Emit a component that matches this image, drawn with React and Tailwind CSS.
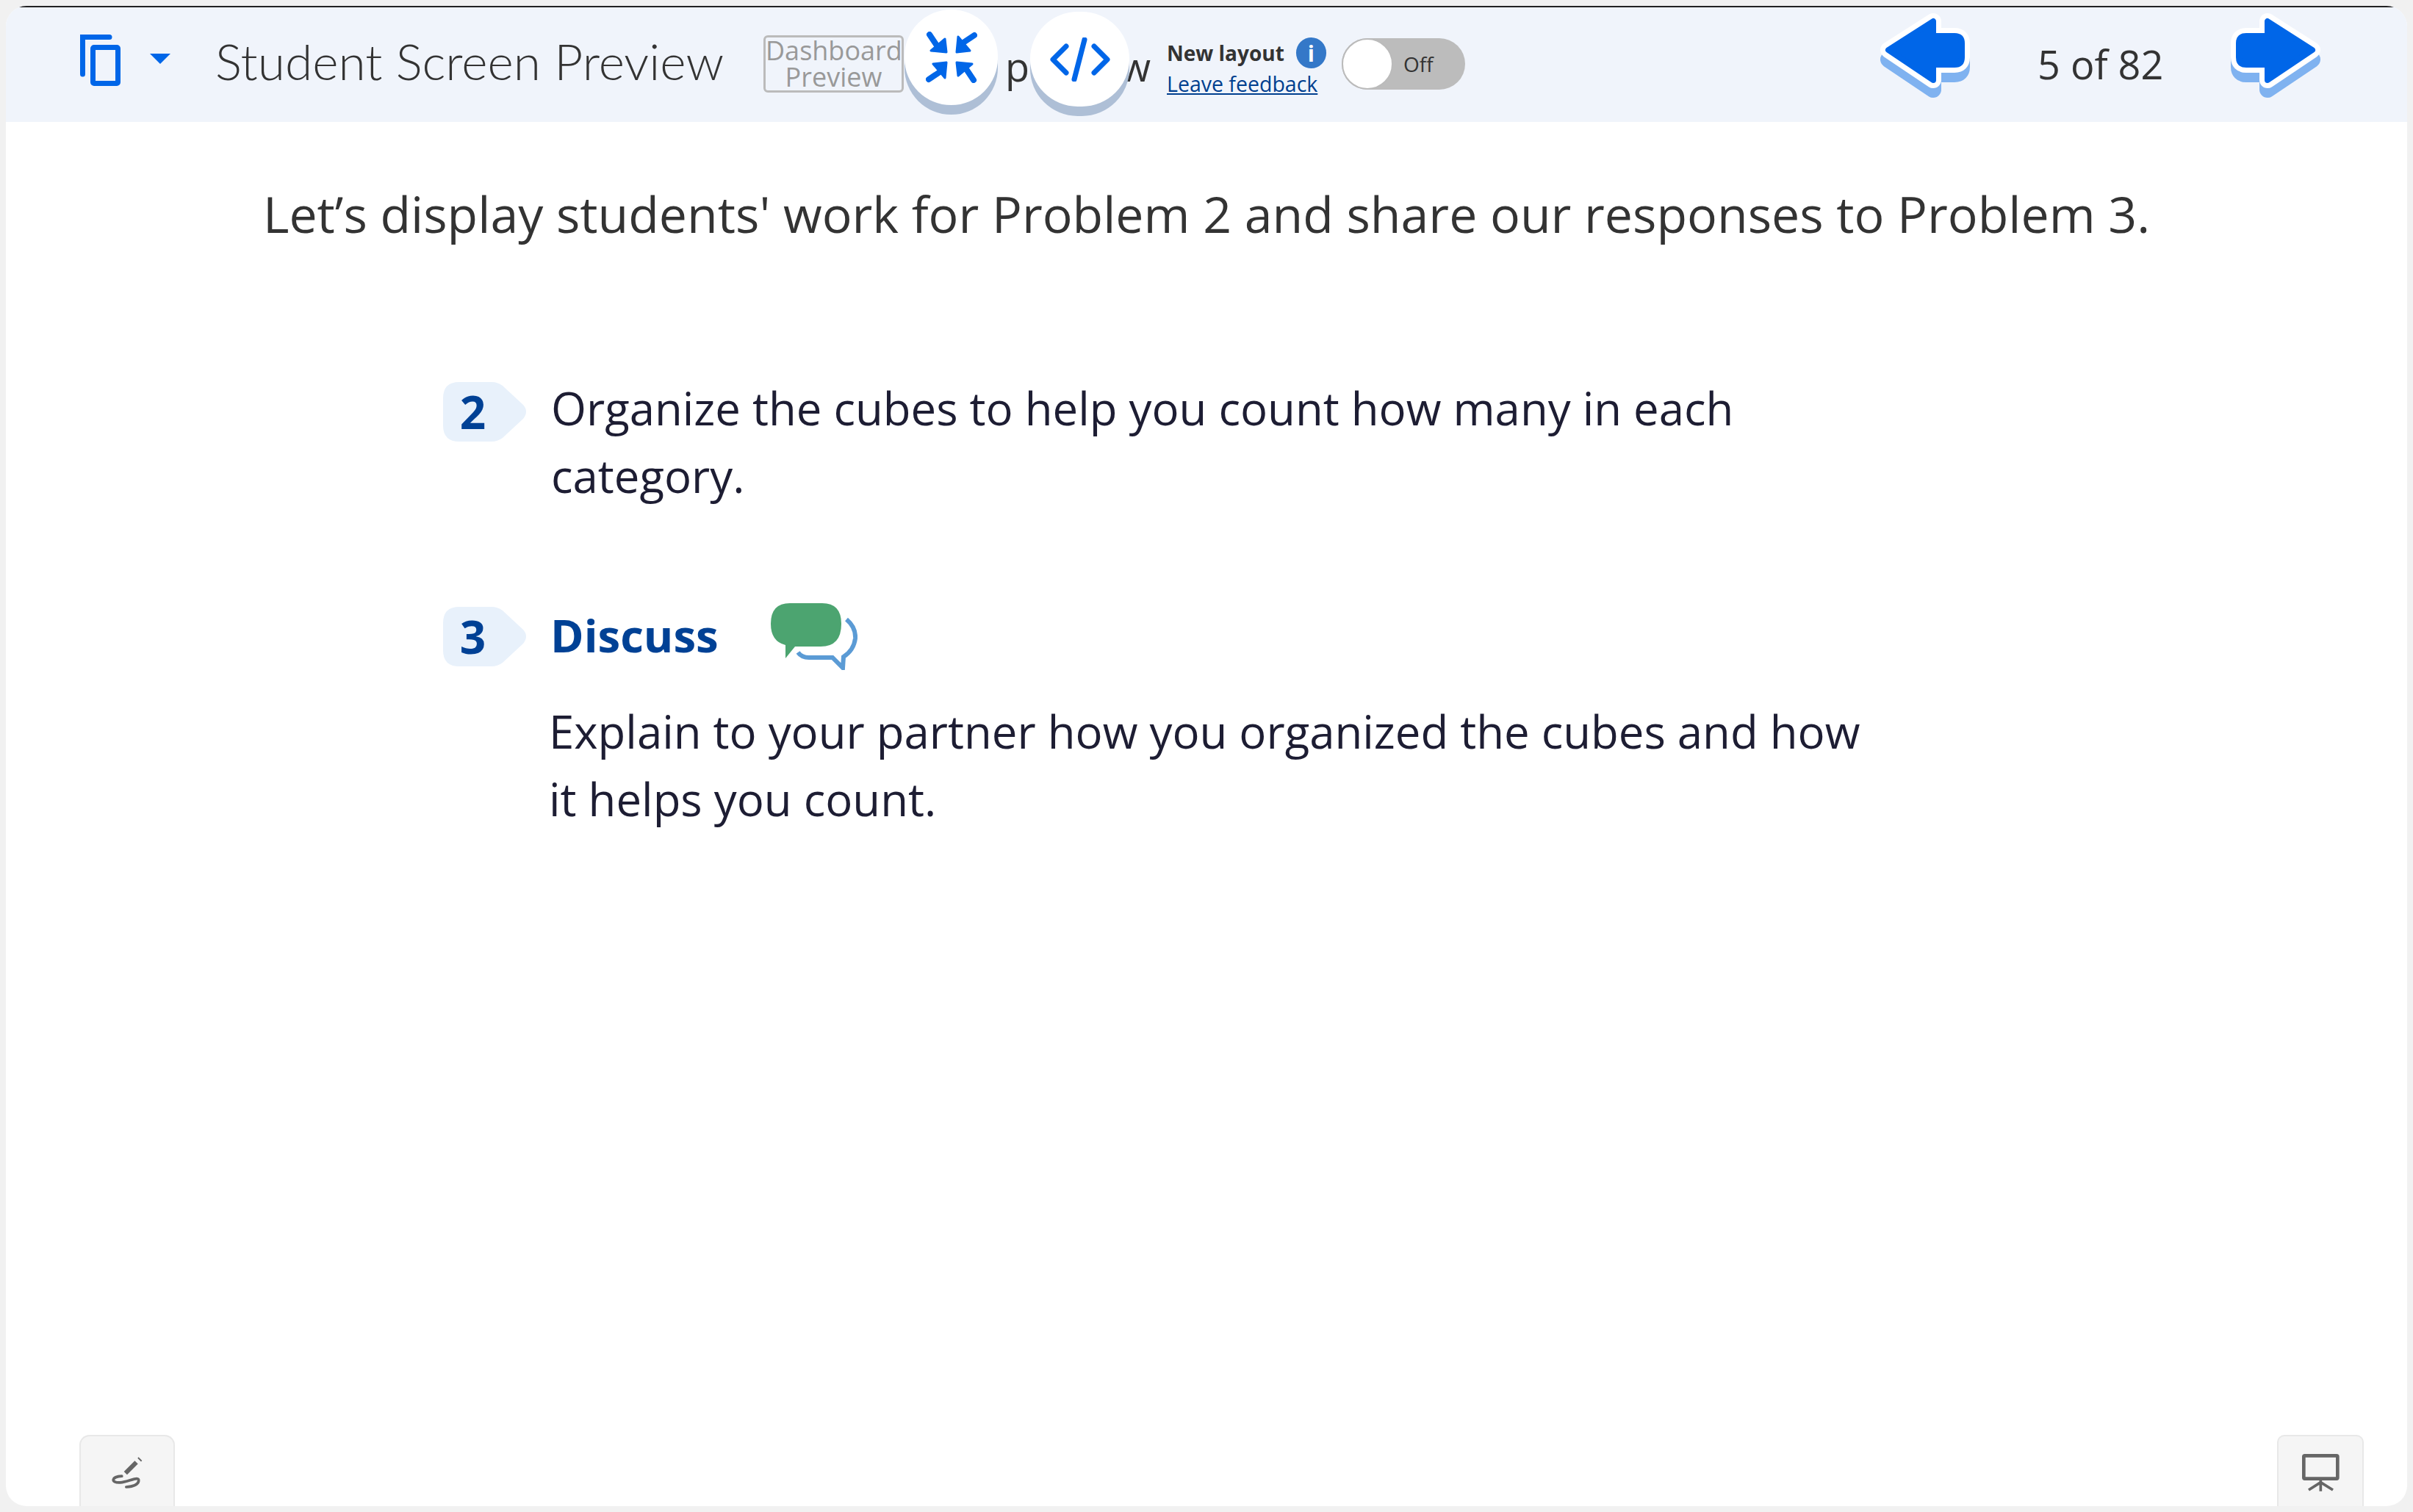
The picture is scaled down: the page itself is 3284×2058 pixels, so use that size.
const BLUE = "#0066e8";

const CopyIcon = () => (
  <svg width="55" height="70" viewBox="0 0 55 70" className="mt-[37px] ml-[101px] shrink-0">
    <path d="M40 3.5H3.5V54" fill="none" stroke={BLUE} strokeWidth="7" strokeLinecap="round" />
    <rect x="17.5" y="17.5" width="34" height="49" rx="1.5" fill="none" stroke={BLUE} strokeWidth="7" />
  </svg>
);

const Caret = () => (
  <svg width="28" height="14" viewBox="0 0 28 14" className="mt-[63px] ml-[40px] shrink-0">
    <path d="M0 0H28L14 14Z" fill={BLUE} />
  </svg>
);

const CompressIcon = () => {
  const arrow = (
    <>
      <path d="M28 28L7 26L26 10Z" fill={BLUE} stroke={BLUE} strokeWidth="3" strokeLinejoin="round" />
      <path d="M5 4L15 19" stroke={BLUE} strokeWidth="8" strokeLinecap="round" />
    </>
  );
  return (
    <svg width="70" height="70" viewBox="0 0 70 70">
      <g>{arrow}</g>
      <g transform="rotate(90 35 35)">{arrow}</g>
      <g transform="rotate(180 35 35)">{arrow}</g>
      <g transform="rotate(270 35 35)">{arrow}</g>
    </svg>
  );
};

const CodeIcon = () => (
  <svg width="82" height="60" viewBox="0 0 82 60" fill="none" stroke={BLUE} strokeWidth="7" strokeLinecap="round" strokeLinejoin="round">
    <path d="M22 12L4 30L22 48" />
    <path d="M47 3L33 57" />
    <path d="M60 12L78 30L60 48" />
  </svg>
);

const NavArrow = ({ flip, className }) => {
  const d = "M13 50L74 11V31H103Q113 31 113 41V60Q113 70 103 70H74V91Z";
  return (
    <svg width="124" height="116" viewBox="0 0 124 116" className={className}>
      <g transform={flip ? "translate(124 0) scale(-1 1)" : undefined} strokeLinejoin="round">
        <path d={d} transform="translate(0 13)" fill="#7fb2f0" stroke="#7fb2f0" strokeWidth="22" />
        <path d={d} fill="#ffffff" stroke="#ffffff" strokeWidth="22" />
        <path d={d} fill={BLUE} stroke={BLUE} strokeWidth="8" />
      </g>
    </svg>
  );
};

const Badge = ({ n }) => (
  <div className="relative w-[115px] h-[81px] shrink-0 flex items-center justify-center">
    <svg width="115" height="81" viewBox="0 0 115 81" className="absolute inset-0">
      <path
        d="M22 0H66Q74 0 81 5L109 31Q117 40 109 50L81 76Q74 81 66 81H22Q0 81 0 59V22Q0 0 22 0Z"
        fill="#e8f1fb"
      />
    </svg>
    <span className="relative pr-[34px] pb-[2px] text-[62px] leading-none font-bold text-[#004195]">{n}</span>
  </div>
);

const ChatIcon = () => (
  <svg width="118" height="91" viewBox="0 0 118 91" className="shrink-0">
    <path
      d="M103 22Q116 33 115 48Q113 64 99 73L98 88L84 74H52Q42 74 37 67"
      fill="none"
      stroke="#5b9bd5"
      strokeWidth="6"
    />
    <path
      d="M26 0H70Q96 0 96 28Q96 59 68 59H33L20 75V57Q0 52 0 28Q0 0 26 0Z"
      fill="#4ca470"
    />
  </svg>
);

const PenIcon = () => (
  <svg width="47" height="47" viewBox="450 240 140 140" fill="none" stroke="#666666">
    <path d="M572 254L568 258" strokeWidth="20" />
    <path d="M556 268L512 312" strokeWidth="18" />
    <path d="M497 324C455 325 450 352 490 350C530 345 570 320 565 345C560 365 530 367 515 368" strokeWidth="11" strokeLinecap="round" />
  </svg>
);

const BoardIcon = () => (
  <svg width="55" height="55" viewBox="392 230 165 165" fill="none" stroke="#666666">
    <rect x="405" y="243" width="138" height="94" rx="4" strokeWidth="14" />
    <path d="M474 340V388M474 352L425 383M474 352L524 383" strokeWidth="11" />
  </svg>
);

export default function App() {
  return (
    <div className="w-[3284px] h-[2058px] bg-[#f1f1f1] p-2 overflow-hidden font-['Open_Sans',sans-serif]">
      <div className="h-full rounded-[28px] bg-white overflow-hidden flex flex-col">
        <header className="h-[158px] shrink-0 flex items-start border-t-2 border-[#222222] bg-[#f0f4fb]">
          <CopyIcon />
          <Caret />
          <div className="w-[746px] ml-[61px] shrink-0 mt-[37px] text-[67.6px] leading-[72px] font-light text-[#333333] whitespace-nowrap font-['Lato',sans-serif]">
            Student Screen Preview
          </div>
          <div className="w-[191px] h-[78px] shrink-0 mt-[38px] rounded-[6px] border-[3px] border-[#bbbbbb] text-center text-[36px] leading-[36px] text-[#999999]">
            Dashboard
            <br />
            Preview
          </div>

          <div className="relative w-[358px] h-full shrink-0">
            <div className="pl-[138px] mt-[44px] text-[54px] leading-[72px] text-[#333333]">preview</div>
            <div className="absolute left-[1px] top-[3px] w-[127px] h-[130px] rounded-full bg-white shadow-[0_13px_0_#aebfd6] flex items-center justify-center">
              <CompressIcon />
            </div>
            <div className="absolute left-[172px] top-[6px] w-[135px] h-[129px] rounded-full bg-white shadow-[0_13px_0_#aebfd6] flex items-center justify-center">
              <CodeIcon />
            </div>
          </div>

          <div className="w-[238px] shrink-0 mt-[40px]">
            <div className="flex items-center gap-[16px] h-[44px]">
              <span className="text-[28px] font-bold text-[#333333]">New layout</span>
              <span className="w-[41px] h-[42px] rounded-full bg-[#3478c8] flex items-center justify-center text-[30px] font-bold text-white">
                i
              </span>
            </div>
            <a className="block text-[28.5px] leading-[40px] text-[#003f8f] underline">Leave feedback</a>
          </div>

          <div className="relative w-[168px] h-[70px] shrink-0 mt-[42px] rounded-full bg-[#bcbcbc]">
            <div className="absolute left-0 top-0 w-[70px] h-[70px] rounded-full bg-white border-2 border-[#bbbbbb]" />
            <span className="absolute left-[84px] top-[16px] text-[28px] leading-[38px] text-[#333333]">Off</span>
          </div>

          <NavArrow className="ml-[563px] mt-[8px] shrink-0" />
          <div className="w-[167px] ml-[92px] mr-[2px] shrink-0 mt-[41px] text-[54px] leading-[72px] text-[#333333] whitespace-nowrap">5 of 82</div>
          <NavArrow flip className="ml-[94px] mt-[8px] shrink-0" />
        </header>

        <main className="flex-1 min-h-0">
          <h1 className="mt-[76px] text-center text-[68px] leading-[98px] font-normal text-[#333333]">
            Let’s display students' work for Problem 2 and share our responses to Problem 3.
          </h1>
          <div className="ml-[595px] mt-[180px] flex items-start">
            <Badge n="2" />
            <p className="ml-[32px] -mt-[11px] w-[1800px] text-[61.7px] leading-[92px] text-[#1d1d33]">
              Organize the cubes to help you count how many in each category.
            </p>
          </div>
          <div className="ml-[595px] mt-[128px] flex items-center h-[91px]">
            <Badge n="3" />
            <h2 className="ml-[31px] w-[300px] -mt-[5px] text-[61.7px] font-bold text-[#004195]">Discuss</h2>
            <ChatIcon />
          </div>
          <p className="ml-[739px] mt-[37px] w-[1800px] text-[61.7px] leading-[92px] text-[#1d1d33]">
            Explain to your partner how you organized the cubes and how it helps you count.
          </p>
        </main>

        <footer className="h-[97px] shrink-0 flex justify-between pl-[100px] pr-[59px]">
          <div className="w-[130px] h-[97px] rounded-t-[14px] border-2 border-b-0 border-[#e8e8e8] bg-[#f5f5f5] flex justify-center pt-[26px]">
            <PenIcon />
          </div>
          <div className="w-[118px] h-[97px] rounded-t-[10px] border-2 border-b-0 border-[#e8e8e8] bg-[#f5f5f5] flex justify-center pt-[22px]">
            <BoardIcon />
          </div>
        </footer>
      </div>
    </div>
  );
}
